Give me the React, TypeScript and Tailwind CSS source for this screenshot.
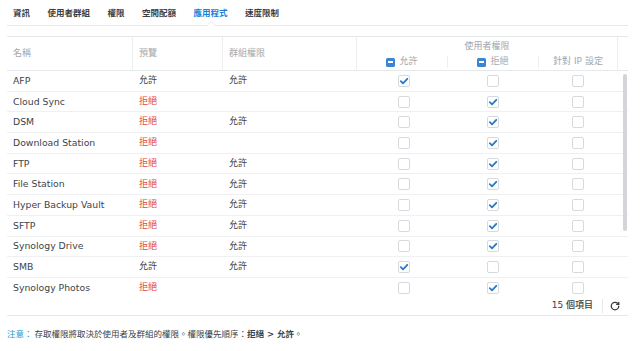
import { RotateCw } from 'lucide-react'

const font = { fontFamily: '"DejaVu Sans", "Noto Sans CJK TC", sans-serif' }

const tabs = ['資訊', '使用者群組', '權限', '空間配額', '應用程式', '速度限制']

type Row = { name: string; preview: 'allow' | 'deny'; group?: string; allow: boolean; deny: boolean }

const rows: Row[] = [
  { name: 'AFP', preview: 'allow', group: '允許', allow: true, deny: false },
  { name: 'Cloud Sync', preview: 'deny', allow: false, deny: true },
  { name: 'DSM', preview: 'deny', group: '允許', allow: false, deny: true },
  { name: 'Download Station', preview: 'deny', allow: false, deny: true },
  { name: 'FTP', preview: 'deny', group: '允許', allow: false, deny: true },
  { name: 'File Station', preview: 'deny', group: '允許', allow: false, deny: true },
  { name: 'Hyper Backup Vault', preview: 'deny', group: '允許', allow: false, deny: true },
  { name: 'SFTP', preview: 'deny', group: '允許', allow: false, deny: true },
  { name: 'Synology Drive', preview: 'deny', group: '允許', allow: false, deny: true },
  { name: 'SMB', preview: 'allow', group: '允許', allow: true, deny: false },
  { name: 'Synology Photos', preview: 'deny', allow: false, deny: true },
]

function Checkbox({ checked }: { checked: boolean }) {
  return (
    <div className="w-[12px] h-[12px] rounded-[2px] border border-[#d6dade] bg-white flex items-center justify-center">
      {checked && (
        <svg width="10" height="10" viewBox="0 0 10 10">
          <path d="M1.8 5.2 L4 7.3 L8.3 2.8" fill="none" stroke="#2a78c8" strokeWidth="1.8" strokeLinecap="round" strokeLinejoin="round" />
        </svg>
      )}
    </div>
  )
}

function MinusBox() {
  return (
    <div className="w-[9px] h-[9px] rounded-[1.5px] bg-[#3b86d4] flex items-center justify-center">
      <div className="w-[5px] h-[1.5px] bg-white" />
    </div>
  )
}

export default function App() {
  return (
    <div className="w-[640px] h-[351px] bg-white pl-[7px] pr-[12px] overflow-hidden" style={font}>
      {/* Tabs */}
      <div className="h-[26px] border-b border-[#e6e9ec] flex items-center gap-[17.5px] pl-[6px] pt-[2px]">
        {tabs.map((t) => (
          <div key={t} className="relative h-full flex items-center">
            <span className={`text-[8.5px] font-bold ${t === '應用程式' ? 'text-[#1a7fd6]' : 'text-[#3a3f45]'}`}>{t}</span>
            {t === '應用程式' && (
              <svg className="absolute left-1/2 -translate-x-1/2 bottom-[-1px]" width="9" height="5" viewBox="0 0 9 5">
                <path d="M0 5 L4.5 0.5 L9 5" fill="white" stroke="#e6e9ec" strokeWidth="1" />
              </svg>
            )}
          </div>
        ))}
      </div>

      {/* Table */}
      <div className="mt-[10px] border-t border-[#e6e9ec]">
        <div className="h-[34px] flex border-b border-[#e6e9ec] text-[9px] text-[#a3a8ad]">
          <div className="w-[126px] border-r border-[#eceef0] flex items-center pl-[6px]">名稱</div>
          <div className="w-[90px] border-r border-[#eceef0] flex items-center pl-[6px]">預覽</div>
          <div className="w-[134px] border-r border-[#eceef0] flex items-center pl-[6px]">群組權限</div>
          <div className="w-[261px] border-r border-[#eceef0] flex flex-col">
            <div className="h-[17px] flex items-end justify-center pb-[1px]">使用者權限</div>
            <div className="flex-1 flex items-center">
              <div className="w-[90px] flex items-center justify-center gap-[4px]">
                <MinusBox />
                <span>允許</span>
              </div>
              <div className="w-px h-[12px] bg-[#eceef0]" />
              <div className="w-[90px] flex items-center justify-center gap-[4px]">
                <MinusBox />
                <span>拒絕</span>
              </div>
              <div className="w-px h-[12px] bg-[#eceef0]" />
              <div className="flex-1 flex items-center justify-center">針對 IP 設定</div>
            </div>
          </div>
          <div className="flex-1" />
        </div>

        <div className="relative h-[226px] overflow-hidden">
          {rows.map((r) => (
            <div key={r.name} className="h-[20.7px] flex items-center border-b border-[#eef0f2] text-[9.3px] text-[#3c444b]">
              <div className="w-[126px] pl-[6px]">{r.name}</div>
              <div className={`w-[90px] pl-[6px] text-[9px] ${r.preview === 'deny' ? 'text-[#e0443c]' : 'text-[#3c444b]'}`}>
                {r.preview === 'deny' ? '拒絕' : '允許'}
              </div>
              <div className="w-[134px] pl-[6px] text-[9px]">{r.group ?? ''}</div>
              <div className="w-[90px] flex justify-center pl-[3px]">
                <Checkbox checked={r.allow} />
              </div>
              <div className="w-[91px] flex justify-center">
                <Checkbox checked={r.deny} />
              </div>
              <div className="w-[80px] flex justify-center">
                <Checkbox checked={false} />
              </div>
            </div>
          ))}
          <div className="absolute right-[1px] top-[3px] w-[4px] h-[157px] rounded-full bg-[#d3d5d8]" />
        </div>

        {/* Footer */}
        <div className="h-[19px] border-b border-[#e6e9ec] flex items-center justify-end pr-[8px]">
          <span className="text-[9px] text-[#3a3f45] font-medium">15 個項目</span>
          <div className="w-px h-[14px] bg-[#e6e9ec] ml-[9px] mr-[7px]" />
          <RotateCw size={10} strokeWidth={3} className="text-[#33383d]" />
        </div>
      </div>

      {/* Note */}
      <div className="mt-[12px] text-[8.5px] text-[#3a3f45] flex items-center">
        <span className="text-[#1a9bd4]">注意：</span>
        <span className="ml-[2px]">存取權限將取決於使用者及群組的權限。權限優先順序：</span>
        <span className="font-bold">拒絕 &gt; 允許</span>
        <span>。</span>
      </div>
    </div>
  )
}
